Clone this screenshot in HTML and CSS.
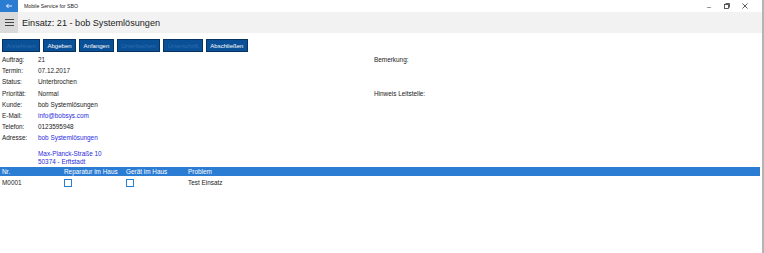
FILE: index.html
```html
<!DOCTYPE html>
<html lang="de">
<head>
	<meta charset="utf-8">
	<title>Mobile Service for SBO</title>
	<link rel="stylesheet" href="styles.css">
</head>
<body>
	<div class="window">
		<div class="titlebar">
			<div class="back">
				<svg width="8" height="6" viewBox="0 0 8 6"><path d="M7 3H1.5M3.5 1 1.5 3l2 2" stroke="#fff" stroke-width="0.9" fill="none"/></svg>
			</div>
			<span class="apptitle">Mobile Service for SBO</span>
			<div class="controls">
				<span class="ctl">&#8211;</span>
				<span class="ctl"><svg width="6" height="6" viewBox="0 0 6 6"><rect x="0.5" y="1.5" width="4" height="4" fill="none" stroke="#333" stroke-width="0.8"/><path d="M1.5 0.5h4v4" fill="none" stroke="#333" stroke-width="0.8"/></svg></span>
				<span class="ctl"><svg width="6" height="6" viewBox="0 0 6 6"><path d="M0.5 0.5 5.5 5.5M5.5 0.5 0.5 5.5" stroke="#333" stroke-width="0.8"/></svg></span>
			</div>
		</div>
		<div class="header">
			<div class="menu">
				<svg width="9" height="7" viewBox="0 0 9 7"><path d="M0 0.5h9M0 3.5h9M0 6.5h9" stroke="#333" stroke-width="0.9"/></svg>
			</div>
			<h1>Einsatz: 21 - bob Systemlösungen</h1>
		</div>
		<div class="content">
			<div class="actions">
				<button class="btn off">Annehmen</button>
				<button class="btn">Abgeben</button>
				<button class="btn">Anfangen</button>
				<button class="btn off">Unterbechen</button>
				<button class="btn off">Unterschrift</button>
				<button class="btn">Abschließen</button>
			</div>
			<div class="details">
				<div class="fields">
					<span class="lbl">Auftrag:</span><span>21</span>
					<span class="lbl">Termin:</span><span>07.12.2017</span>
					<span class="lbl">Status:</span><span>Unterbrochen</span>
					<span class="lbl">Priorität:</span><span>Normal</span>
					<span class="lbl">Kunde:</span><span>bob Systemlösungen</span>
					<span class="lbl">E-Mail:</span><span class="link">info@bobsys.com</span>
					<span class="lbl">Telefon:</span><span>0123595948</span>
					<span class="lbl">Adresse:</span><span class="link">bob Systemlösungen</span>
					<span></span><span class="link street">Max-Planck-Straße 10<br>50374 - Erftstadt</span>
				</div>
				<div class="notes">
					<span>Bemerkung:</span>
					<span class="hint">Hinweis Leitstelle:</span>
				</div>
			</div>
			<div class="table">
				<div class="row head">
					<span>Nr.</span><span>Reparatur im Haus</span><span>Gerät im Haus</span><span>Problem</span>
				</div>
				<div class="row">
					<span>M0001</span><span><i class="check"></i></span><span><i class="check"></i></span><span>Test Einsatz</span>
				</div>
			</div>
		</div>
	</div>
</body>
</html>
```

FILE: styles.css
```css
*{
	margin: 0;
	padding: 0;
	box-sizing: border-box;
}
body{
	background: #fff;
	font-family: "Liberation Sans", Arial, sans-serif;
	font-size: 6.4px;
	color: #222;
	width: 764px;
	height: 253px;
	overflow: hidden;
}
.window{
	width: 764px;
	height: 253px;
	border-right: 2px solid #b4b4b4;
}
.titlebar{
	display: flex;
	align-items: center;
	height: 12px;
}
.back{
	width: 18px;
	height: 12px;
	background: #2b7cd3;
	display: flex;
	align-items: center;
	justify-content: center;
}
.apptitle{
	margin-left: 6px;
	font-size: 5.2px;
	color: #222;
}
.controls{
	margin-left: auto;
	display: flex;
	margin-right: 8px;
}
.ctl{
	width: 18px;
	font-size: 7px;
	color: #333;
	display: flex;
	justify-content: center;
	align-items: center;
}
.header{
	display: flex;
	align-items: center;
	height: 21px;
	background: #f2f2f2;
}
.menu{
	width: 18px;
	height: 21px;
	background: #dadada;
	display: flex;
	align-items: center;
	justify-content: center;
}
h1{
	margin-left: 4px;
	font-weight: normal;
	font-size: 9.1px;
	color: #222;
}
.content{
	padding-top: 6px;
}
.actions{
	display: flex;
	gap: 3px;
	padding-left: 2px;
}
.btn{
	height: 13px;
	padding: 0 3.5px;
	border: 1px solid #08325f;
	background: #0a5096;
	color: #fff;
	font-family: inherit;
	font-size: 6px;
}
.btn.off{
	color: #2f6cb0;
}
.details{
	display: flex;
	padding-top: 2px;
}
.fields{
	display: grid;
	grid-template-columns: 36px auto;
	grid-auto-rows: 11.2px;
	padding-left: 2px;
	width: 374px;
	line-height: 11.2px;
}
.link{
	color: #2a2ae0;
}
.street{
	grid-row: span 2;
	padding-top: 6px;
	line-height: 8.5px;
}
.notes{
	display: flex;
	flex-direction: column;
	line-height: 11.2px;
}
.hint{
	margin-top: 22.4px;
}
.table{
	margin-top: 1px;
}
.row{
	display: grid;
	grid-template-columns: 62px 62px 62px auto;
	padding-left: 2px;
	height: 14px;
	align-items: center;
}
.row.head{
	background: #2b7cd3;
	color: #fff;
	height: 9px;
	line-height: 9px;
	margin-right: 2px;
}
.check{
	display: block;
	width: 8px;
	height: 8px;
	border: 1px solid #2b7cd3;
}
```
